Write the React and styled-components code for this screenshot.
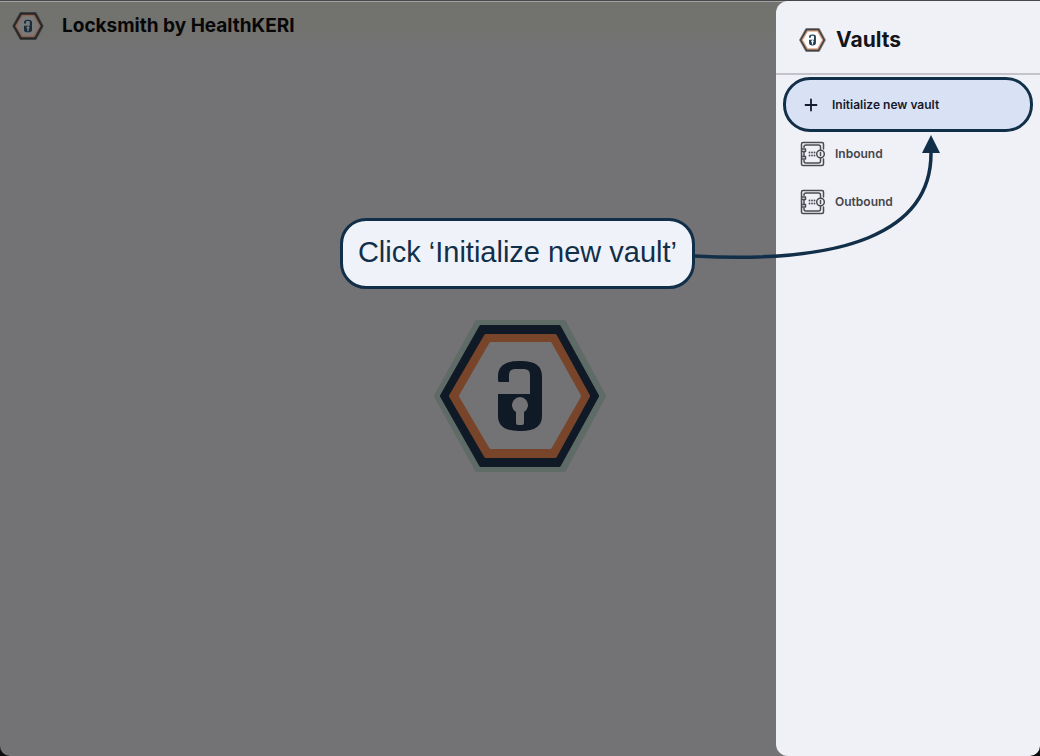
import React from "react";
import styled, { createGlobalStyle } from "styled-components";

const navy = "#122f49";

const GlobalStyle = createGlobalStyle`
  *, *::before, *::after { box-sizing: border-box; }
  html { background: #0c0c0e; }
  body {
    margin: 0;
    font-family: Inter, "Liberation Sans", sans-serif;
    -webkit-font-smoothing: antialiased;
  }
`;

const Window = styled.div`
  position: relative;
  display: flex;
  flex-direction: column;
  min-height: 100vh;
  overflow: hidden;
  border-top: 1px solid #48484a;
  border-radius: 0 0 10px 10px;
  background: #737375;
`;

const TopBar = styled.header`
  display: flex;
  align-items: center;
  gap: 18px;
  height: 48px;
  padding: 0 12px;
  border-top: 1px solid #a3a3a3;
  background: linear-gradient(#72726f 60%, #737375);
`;

const AppTitle = styled.h1`
  margin: 0;
  color: #070708;
  font-size: 19px;
  font-weight: 700;
  line-height: 24px;
`;

const Stage = styled.main`
  display: flex;
  flex: 1;
  align-items: center;
  justify-content: center;
  padding-bottom: 14px;
`;

const Drawer = styled.aside`
  position: absolute;
  top: 0;
  right: 0;
  bottom: 0;
  display: flex;
  flex-direction: column;
  width: 264px;
  border-radius: 12px 0 10px 12px;
  background: #f0f1f7;
`;

const DrawerHeader = styled.div`
  display: flex;
  align-items: center;
  gap: 10px;
  height: 74px;
  padding: 5px 23px 0;
  border-bottom: 2px solid #c3c3c9;
`;

const DrawerTitle = styled.h2`
  margin: 0;
  color: #141519;
  font-size: 21px;
  font-weight: 700;
  line-height: 28px;
`;

const VaultNav = styled.nav`
  display: flex;
  flex-direction: column;
  padding: 2px 7px;
`;

const NavButton = styled.button`
  display: flex;
  align-items: center;
  gap: 14px;
  width: 100%;
  height: 55px;
  padding: 0 18px;
  border: 3px solid ${navy};
  border-radius: 27px;
  background: #d9e2f5;
  color: #151a2c;
  font-family: inherit;
  font-size: 12px;
  font-weight: 600;
  line-height: 16px;
  text-align: left;
  cursor: pointer;
`;

const VaultButton = styled(NavButton)`
  gap: 10px;
  height: 48px;
  padding: 0 17px 4px;
  border: 0;
  background: transparent;
  color: #44454b;
`;

const Callout = styled.div`
  position: absolute;
  top: 217px;
  right: 345px;
  height: 71px;
  padding: 0 15px;
  border: 3px solid ${navy};
  border-radius: 26px;
  background: #f0f2f9;
  color: ${navy};
  font-family: "Liberation Sans", Arial, sans-serif;
  font-size: 29px;
  line-height: 62px;
  white-space: nowrap;
`;

const Pointer = styled.svg`
  position: absolute;
  top: 133px;
  right: 96px;
  pointer-events: none;
`;

const brandColors = {
  dim: {
    halo: "#5f6b66",
    frame: "#101a26",
    ring: "#78452a",
    face: "#737375",
    lock: "#101a26",
  },
  bright: {
    halo: "#6d6d6c",
    frame: "#3b3b3f",
    ring: "#dba684",
    face: "#ffffff",
    lock: "#1d3d50",
  },
  bar: {
    halo: "#353736",
    frame: "#242529",
    ring: "#8a6452",
    face: "#7a7a7a",
    lock: "#1a2c3c",
  },
};

function Hexagon({ points, fill }) {
  return (
    <polygon
      points={points}
      fill={fill}
      stroke={fill}
      strokeWidth="4"
      strokeLinejoin="round"
    />
  );
}

function BrandMark({ width, height, tone }) {
  const c = brandColors[tone];
  return (
    <svg width={width} height={height} viewBox="0 0 174 154" aria-hidden="true">
      <Hexagon points="3,77 44,3 131,3 171,77 131,151 44,151" fill={c.halo} />
      <Hexagon points="9,77 48,8 126,8 164,77 126,146 48,146" fill={c.frame} />
      <Hexagon points="18,77 53,17 122,17 155,77 122,137 53,137" fill={c.ring} />
      <Hexagon points="28,77 58,25 117,25 146,77 117,128 58,128" fill={c.face} />
      <path
        fill={c.lock}
        fillRule="evenodd"
        d="M65 61V57Q65 42 86 42H88Q109 42 109 57V97Q109 112 88 112H86Q65 112 65 97V75H97V56Q97 50 91 50H82Q76 50 76 56V63H66Q65 63 65 61Z M83 93V104Q83 106 85 106H89Q91 106 91 104V93A8 8 0 1 0 83 93Z"
      />
    </svg>
  );
}

function PlusIcon() {
  return (
    <svg width="14" height="14" viewBox="0 0 14 14" aria-hidden="true">
      <path
        d="M7 1.5V12.5M1.5 7H12.5"
        stroke="#151a2c"
        strokeWidth="1.8"
        strokeLinecap="round"
      />
    </svg>
  );
}

function SafeIcon() {
  return (
    <svg
      width="25"
      height="26"
      viewBox="0 0 25 26"
      fill="none"
      stroke="#4b4b50"
      strokeWidth="1.5"
      strokeLinecap="round"
      strokeLinejoin="round"
      aria-hidden="true"
    >
      <path d="M23.5 8V3Q23.5 1.5 22 1.5H3Q1.5 1.5 1.5 3V23Q1.5 24.5 3 24.5H22Q23.5 24.5 23.5 23V18" />
      <path d="M4 6.5V6Q4 4 6 4H18.5Q20.5 4 20.5 6V9M20.5 17V20Q20.5 22 18.5 22H6Q4 22 4 20V19.5" />
      <path d="M2 8H5.5V10.5H2M2 15.5H5.5V18H2M4 11.5V14.5" />
      <circle cx="20.5" cy="13" r="3.8" />
      <path d="M20.5 11.5V14.5" />
      <g fill="#4b4b50" stroke="none">
        <circle cx="9.5" cy="11.5" r="0.9" />
        <circle cx="12" cy="11.5" r="0.9" />
        <circle cx="14.5" cy="11.5" r="0.9" />
        <circle cx="9.5" cy="14.5" r="0.9" />
        <circle cx="12" cy="14.5" r="0.9" />
        <circle cx="14.5" cy="14.5" r="0.9" />
      </g>
    </svg>
  );
}

const vaults = ["Inbound", "Outbound"];

export default function App() {
  return (
    <>
      <GlobalStyle />
      <Window>
        <TopBar>
          <BrandMark width={32} height={28} tone="bar" />
          <AppTitle>Locksmith by HealthKERI</AppTitle>
        </TopBar>
        <Stage>
          <BrandMark width={174} height={154} tone="dim" />
        </Stage>
        <Drawer>
          <DrawerHeader>
            <BrandMark width={27} height={24} tone="bright" />
            <DrawerTitle>Vaults</DrawerTitle>
          </DrawerHeader>
          <VaultNav aria-label="Vaults">
            <NavButton type="button">
              <PlusIcon />
              Initialize new vault
            </NavButton>
            {vaults.map((name) => (
              <VaultButton type="button" key={name}>
                <SafeIcon />
                {name}
              </VaultButton>
            ))}
          </VaultNav>
        </Drawer>
        <Callout>Click ‘Initialize new vault’</Callout>
        <Pointer width="252" height="128" viewBox="0 0 252 128" aria-hidden="true">
          <path
            d="M2 122C150 130 240 100 239 18"
            fill="none"
            stroke={navy}
            strokeWidth="3.5"
          />
          <path d="M239 1L248 19H230Z" fill={navy} />
        </Pointer>
      </Window>
    </>
  );
}
